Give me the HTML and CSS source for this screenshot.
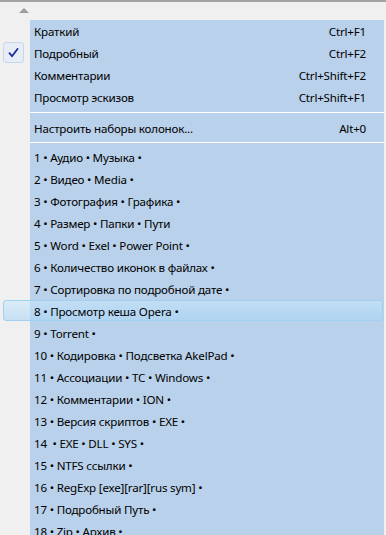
FILE: index.html
```html
<!DOCTYPE html>
<html lang="ru">
<head>
<meta charset="utf-8">
<link rel="stylesheet" href="styles.css">
</head>
<body>
<div class="topline"></div>
<div class="arrow-row"><span class="arrow"></span></div>
<div class="menu">
  <div class="item"><span class="label">Краткий</span><span class="key">Ctrl+F1</span></div>
  <div class="item checked">
    <span class="check"><svg width="11" height="10" viewBox="0 0 11 10"><path d="M1.5 5.2 L4 8.2 L9.5 1" fill="none" stroke="#1b2c9c" stroke-width="1.8" stroke-linecap="round" stroke-linejoin="round"/></svg></span>
    <span class="label">Подробный</span><span class="key">Ctrl+F2</span></div>
  <div class="item"><span class="label">Комментарии</span><span class="key">Ctrl+Shift+F2</span></div>
  <div class="item"><span class="label">Просмотр эскизов</span><span class="key">Ctrl+Shift+F1</span></div>
  <div class="sep sep1"></div>
  <div class="item"><span class="label">Настроить наборы колонок...</span><span class="key">Alt+0</span></div>
  <div class="sep sep2"></div>
  <div class="item"><span class="label">1 • Аудио • Музыка •</span></div>
  <div class="item"><span class="label">2 • Видео • Media •</span></div>
  <div class="item"><span class="label">3 • Фотография • Графика •</span></div>
  <div class="item"><span class="label">4 • Размер • Папки • Пути</span></div>
  <div class="item"><span class="label">5 • Word • Exel • Power Point •</span></div>
  <div class="item"><span class="label">6 • Количество иконок в файлах •</span></div>
  <div class="item"><span class="label">7 • Сортировка по подробной дате •</span></div>
  <div class="item hover"><span class="label">8 • Просмотр кеша Opera •</span></div>
  <div class="item"><span class="label">9 • Torrent •</span></div>
  <div class="item"><span class="label">10 • Кодировка • Подсветка AkelPad •</span></div>
  <div class="item"><span class="label">11 • Ассоциации • TC • Windows •</span></div>
  <div class="item"><span class="label">12 • Комментарии • ION •</span></div>
  <div class="item"><span class="label">13 • Версия скриптов • EXE •</span></div>
  <div class="item"><span class="label">14 &nbsp;• EXE • DLL • SYS •</span></div>
  <div class="item"><span class="label">15 • NTFS ссылки •</span></div>
  <div class="item"><span class="label">16 • RegExp [exe][rar][rus sym] •</span></div>
  <div class="item"><span class="label">17 • Подробный Путь •</span></div>
  <div class="item"><span class="label">18 • Zip • Архив •</span></div>
</div>
</body>
</html>
```
FILE: styles.css
```css
html, body {
  margin: 0;
  padding: 0;
  width: 386px;
  height: 535px;
  overflow: hidden;
  background: #f0f0f0;
}
body {
  font-family: "Noto Sans", "Open Sans", sans-serif;
  font-size: 11.6px;
  letter-spacing: -0.2px;
  color: #000;
}
.topline {
  height: 2px;
  background: #a3a3a3;
}
.arrow-row {
  height: 18px;
  display: flex;
  align-items: flex-start;
}
.arrow {
  margin: 6px 0 0 19px;
  width: 0;
  height: 0;
  border-left: 5px solid transparent;
  border-right: 5px solid transparent;
  border-bottom: 5px solid #9c9c9c;
}
.menu {
  background: linear-gradient(to right, transparent 30px, #b9d1ea 30px, #b9d1ea 384px, transparent 384px);
  min-height: 520px;
}
.item {
  position: relative;
  height: 22px;
  display: flex;
  align-items: center;
  padding: 0 20px 0 34px;
}
.item .label, .item .key {
  position: relative;
  z-index: 1;
  white-space: pre;
}
.item .label { flex: 1; }
.item .key { text-align: right; }
.check {
  position: absolute;
  left: 3px;
  top: 0;
  width: 19px;
  height: 19px;
  border: 1px solid #c9d6e8;
  border-radius: 3px;
  background: #e6edf7;
  display: flex;
  align-items: center;
  justify-content: center;
}
.item.hover::before {
  content: "";
  position: absolute;
  left: 3px;
  right: 3px;
  top: 0;
  bottom: 1px;
  border: 1px solid #9fd2f0;
  border-radius: 3px;
  background: linear-gradient(to bottom, rgba(200,232,252,0.55), rgba(170,214,245,0.6));
}
.sep {
  margin-left: 30px;
  margin-right: 2px;
  position: relative;
}
.sep::after {
  content: "";
  position: absolute;
  left: 0;
  right: 0;
  height: 1px;
  background: #ffffff;
}
.sep1 { height: 9px; }
.sep1::after { top: 4px; }
.sep2 { height: 7px; }
.sep2::after { top: 3px; }
```
